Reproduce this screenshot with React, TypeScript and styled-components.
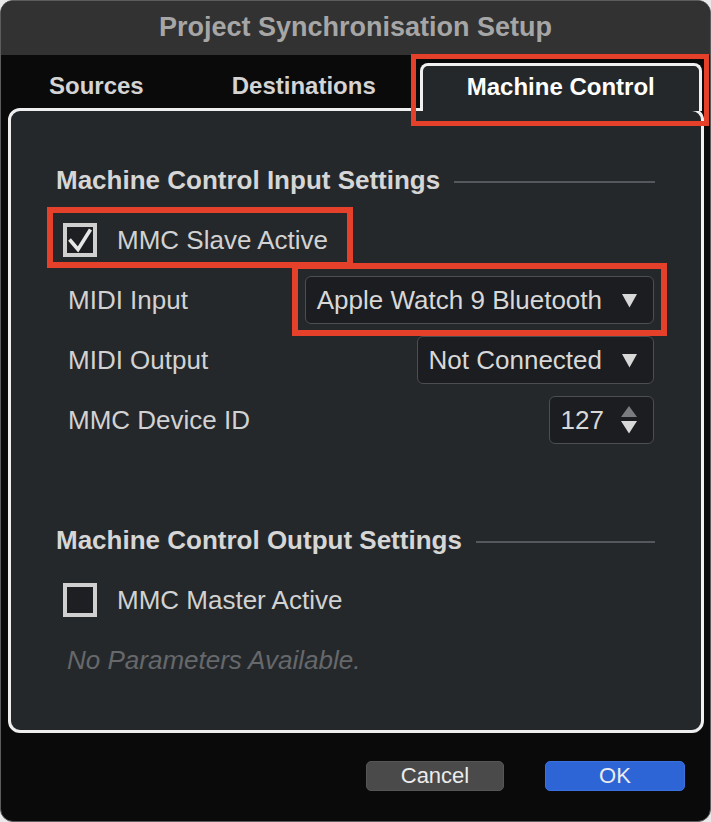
import React from "react";
import styled, { createGlobalStyle } from "styled-components";

const GlobalStyle = createGlobalStyle`
  html, body {
    margin: 0;
    padding: 0;
    background: #e9e9e9;
  }
  body {
    font-family: "Liberation Sans", Arial, Helvetica, sans-serif;
  }
  * { box-sizing: border-box; }
`;

const Window = styled.div`
  position: relative;
  width: 711px;
  height: 822px;
  border: 1px solid #5c5c5c;
  border-radius: 13px;
  overflow: hidden;
  background: #0a0a0a;
  display: flex;
  flex-direction: column;
`;

const TitleBar = styled.div`
  height: 54px;
  flex: none;
  background: #323232;
  display: flex;
  align-items: center;
  justify-content: center;
  font-size: 27px;
  font-weight: 700;
  color: #a6a6a6;
  padding-bottom: 2px;
`;

const TabBar = styled.div`
  height: 53px;
  flex: none;
  display: flex;
  align-items: flex-end;
  padding-left: 4px;
`;

const Tab = styled.div<{ $active?: boolean }>`
  height: ${(p) => (p.$active ? 48 : 45)}px;
  padding: 0 44px;
  display: flex;
  align-items: center;
  justify-content: center;
  font-size: 24px;
  font-weight: 700;
  color: ${(p) => (p.$active ? "#ffffff" : "#d4d4d4")};
  white-space: nowrap;
  ${(p) =>
    p.$active
      ? `
    position: relative;
    z-index: 1;
    margin-bottom: -3px;
    background: #25282b;
    border: 3px solid #f1f1f1;
    border-bottom: none;
    border-radius: 8px 8px 0 0;
    padding-bottom: 3px;
  `
      : ""}
`;

const Panel = styled.div`
  flex: none;
  height: 625px;
  margin: 0 6px 0 7px;
  border: 3px solid #efefef;
  border-radius: 12px;
  background: #25282b;
  padding: 39px 46px 0 45px;
  display: flex;
  flex-direction: column;
`;

const Row = styled.div`
  height: 60px;
  flex: none;
  display: flex;
  align-items: center;
`;

const FieldRow = styled(Row)`
  justify-content: space-between;
  padding-left: 12px;
  padding-right: 1px;
`;

const SectionTitle = styled.div`
  font-size: 26px;
  font-weight: 700;
  color: #d6d6d6;
  white-space: nowrap;
`;

const Rule = styled.div`
  flex: 1;
  height: 2px;
  margin-left: 14px;
  margin-top: 3px;
  background: #55585c;
`;

const Spacer = styled.div`
  height: 60px;
  flex: none;
`;

const CheckRow = styled(Row)`
  padding-left: 7px;
  gap: 20px;
`;

const Box = styled.span`
  width: 34px;
  height: 34px;
  flex: none;
  border: 4px solid #d0d0d0;
  background: #1d1f22;
  display: flex;
  align-items: center;
  justify-content: center;
`;

const Label = styled.span<{ $muted?: boolean; $italic?: boolean }>`
  font-size: 26px;
  color: ${(p) => (p.$muted ? "#66686b" : "#d2d2d2")};
  font-style: ${(p) => (p.$italic ? "italic" : "normal")};
  white-space: nowrap;
`;

const NoteRow = styled(Row)`
  padding-left: 11px;
`;

const Select = styled.div`
  height: 48px;
  display: flex;
  align-items: center;
  gap: 20px;
  padding: 0 16px 0 11px;
  border: 1px solid #4b4e52;
  border-radius: 6px;
  background: #1b1d20;
  font-size: 26px;
  color: #d8d8d8;
  white-space: nowrap;
`;

const Spin = styled(Select)`
  padding-left: 11px;
  gap: 17px;
`;

const Footer = styled.div`
  flex: 1;
  display: flex;
  justify-content: flex-end;
  align-items: flex-start;
  gap: 41px;
  padding: 28px 25px 0 0;
`;

const Button = styled.button<{ $primary?: boolean }>`
  height: 30px;
  width: ${(p) => (p.$primary ? 140 : 138)}px;
  border: 1px solid ${(p) => (p.$primary ? "#3a72e0" : "#565656")};
  border-radius: 5px;
  background: ${(p) => (p.$primary ? "#2d65d6" : "#4a4a4a")};
  color: #ececec;
  font-family: "Liberation Sans", Arial, sans-serif;
  font-size: 22px;
  line-height: 1;
  padding: 0;
  display: flex;
  align-items: center;
  justify-content: center;
`;

const Annotation = styled.div<{ $x: number; $y: number; $w: number; $h: number; $t: number }>`
  position: absolute;
  left: ${(p) => p.$x}px;
  top: ${(p) => p.$y}px;
  width: ${(p) => p.$w}px;
  height: ${(p) => p.$h}px;
  border: ${(p) => p.$t}px solid #e4402a;
  pointer-events: none;
  z-index: 5;
`;

const Check = () => (
  <svg width="26" height="26" viewBox="0 0 26 26">
    <polyline
      points="2.5,12.5 11,22.5 23.5,2.5"
      fill="none"
      stroke="#e6e6e6"
      strokeWidth="3.6"
      strokeLinejoin="miter"
    />
  </svg>
);

const DownArrow = () => (
  <svg width="15" height="15" viewBox="0 0 15 15">
    <polygon points="0,1 15,1 7.5,14.5" fill="#d8d8d8" />
  </svg>
);

const SpinArrows = () => (
  <svg width="16" height="28" viewBox="0 0 16 28">
    <polygon points="8,0 16,11 0,11" fill="#7a7c7f" />
    <polygon points="0,15 16,15 8,27.5" fill="#d8d8d8" />
  </svg>
);

export default function App() {
  return (
    <>
      <GlobalStyle />
      <Window>
        <TitleBar>Project Synchronisation Setup</TitleBar>
        <TabBar>
          <Tab>Sources</Tab>
          <Tab>Destinations</Tab>
          <Tab $active>Machine Control</Tab>
        </TabBar>
        <Panel>
          <Row>
            <SectionTitle>Machine Control Input Settings</SectionTitle>
            <Rule />
          </Row>
          <CheckRow>
            <Box>
              <Check />
            </Box>
            <Label>MMC Slave Active</Label>
          </CheckRow>
          <FieldRow>
            <Label>MIDI Input</Label>
            <Select>
              Apple Watch 9 Bluetooth
              <DownArrow />
            </Select>
          </FieldRow>
          <FieldRow>
            <Label>MIDI Output</Label>
            <Select>
              Not Connected
              <DownArrow />
            </Select>
          </FieldRow>
          <FieldRow>
            <Label>MMC Device ID</Label>
            <Spin>
              127
              <SpinArrows />
            </Spin>
          </FieldRow>
          <Spacer />
          <Row>
            <SectionTitle>Machine Control Output Settings</SectionTitle>
            <Rule />
          </Row>
          <CheckRow>
            <Box />
            <Label>MMC Master Active</Label>
          </CheckRow>
          <NoteRow>
            <Label $muted $italic>
              No Parameters Available.
            </Label>
          </NoteRow>
        </Panel>
        <Footer>
          <Button>Cancel</Button>
          <Button $primary>OK</Button>
        </Footer>
        <Annotation $x={410} $y={53} $w={298} $h={72} $t={5} />
        <Annotation $x={46} $y={206} $w={306} $h={61} $t={6} />
        <Annotation $x={291} $y={262} $w={375} $h={73} $t={6} />
      </Window>
    </>
  );
}
